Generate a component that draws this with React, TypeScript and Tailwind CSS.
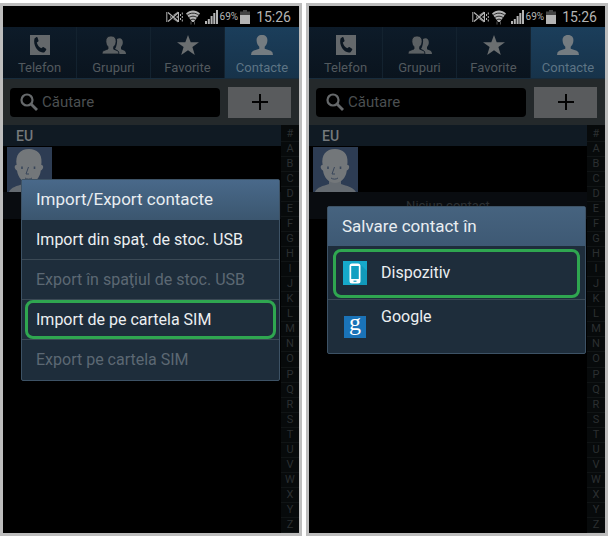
import type { ReactNode } from 'react';

const LETTERS = '#ABCDEFGHIJKLMNOPQRSTUVWXYZ'.split('');

function StatusBar() {
  return (
    <div className="flex h-[21px] items-center justify-end bg-black pt-px pr-2 text-[#b4b4b4]">
      <svg className="mr-[3px] h-3 w-[17px]" viewBox="0 0 17 12" fill="none" stroke="currentColor" aria-hidden="true">
        <path d="M4 4h3l5-3.500v11L7 8H4z" fill="#8c8c8c" stroke="none" />
        <path d="M2.500 2.500L13 9.500M2.500 9.500L13 2.500" stroke="#000" strokeWidth="2.200" />
        <path d="M2 1.500l10.500 9M2 10.500l10.500-9" strokeWidth="1.200" />
        <path d="M.8 1v10M12.500 1v10M14.500 3v2M14.500 7v2M16.300 1.500v2M16.300 5v2M16.300 8.500v2" strokeWidth="1" />
      </svg>
      <svg className="mr-[5px] h-[15px] w-[14px]" viewBox="0 0 14 15" fill="none" aria-hidden="true">
        <path d="M0 3.500C4-.5 10-.5 14 3.500L7.800 12H6.200z" fill="currentColor" />
        <path d="M1 5.400c3.500-3 8.500-3 12 0M2.800 7.700c2.500-2 5.900-2 8.400 0M4.600 9.900c1.500-1 3.300-1 4.800 0" stroke="#000" strokeWidth=".8" />
        <path d="M5 14.500v-3M8.500 11.500v3" stroke="#555" />
      </svg>
      <svg className="mr-0.5 h-[14px] w-[13px]" viewBox="0 0 13 14" fill="currentColor" aria-hidden="true">
        <path d="M0 11h2v3H0zM2.800 9h2v5h-2zM5.600 6h2v8h-2zM8.300 3h2v11h-2zM11 0h2v14h-2z" />
      </svg>
      <span className="mr-0.5 text-[10px] leading-none">69%</span>
      <svg className="mr-[6px] h-[14px] w-[10px]" viewBox="0 0 10 14" fill="currentColor" aria-hidden="true">
        <path d="M3 0h4v1.500h3V5H0V1.500h3z" fill="#444" />
        <path d="M0 5h10v9H0z" />
      </svg>
      <span className="text-[14px] leading-none">15:26</span>
    </div>
  );
}

function PhoneIcon() {
  return (
    <svg className="h-5 w-5" viewBox="0 0 20 20" aria-hidden="true">
      <path d="M0 0h20v20H0z" fill="#64686b" />
      <path
        d="M4.500 3.500L6.500 2q.8-.2 1 .5l1 3q.1.800-.5 1.200L6.800 7.600c.6 2.500 2.100 4.600 4.500 5.700l1.300-1q.6-.4 1.200 0l2.200 1.500q.6.600.1 1.200l-1.600 2.200c-5.800 1.800-11.900-6.500-10-13.700z"
        fill="#0c1722"
      />
    </svg>
  );
}

function GroupIcon() {
  return (
    <svg className="h-5 w-[26px]" viewBox="0 0 26 20" fill="#5b6063" aria-hidden="true">
      <path d="M16 4c3-2 6-.3 5.800 3.500 0 2-.8 3.300-1.800 4.500v2.200l3.500 1.500q1.500.8 1.500 3.200h-7c0-2.500-1-3.500-4-4.800 1.500-2.500 2.500-7 2-10.100z" />
      <path
        d="M10 1c3.500 0 5.300 2.200 5.100 5.500-.1 2.300-1 4.200-2.400 5.300v2.400l3.800 1.500q1.500.8 1.500 3.300H1q0-2.500 1.500-3.300l4.500-1.700v-2.200C5.800 10.700 5 8.800 4.900 6.500 4.700 3.200 6.500 1 10 1z"
        stroke="#0c1722"
        strokeWidth=".8"
      />
    </svg>
  );
}

function StarIcon() {
  return (
    <svg className="h-5 w-[22px]" viewBox="0 0 22 20" fill="#6a6e70" aria-hidden="true">
      <path d="M11 0l2.700 7.300H22l-6.600 4.800L17.800 20 11 15.300 4.200 20l2.400-7.900L0 7.300h8.300z" />
    </svg>
  );
}

function PersonIcon() {
  return (
    <svg className="h-5 w-6" viewBox="0 0 24 20" fill="#747c81" aria-hidden="true">
      <path d="M12 0c3.800 0 5.600 2.300 5.400 5.700-.1 2.500-1.200 4.700-2.700 6v2l6 2q2.300.9 2.300 4.300H1q0-3.400 2.300-4.300l6-2v-2c-1.500-1.300-2.600-3.500-2.700-6C6.400 2.300 8.200 0 12 0z" />
    </svg>
  );
}

const TABS = [
  { name: 'Telefon', icon: <PhoneIcon /> },
  { name: 'Grupuri', icon: <GroupIcon /> },
  { name: 'Favorite', icon: <StarIcon /> },
  { name: 'Contacte', icon: <PersonIcon />, active: true },
];

function Tabs() {
  return (
    <nav className="grid h-[52px] grid-cols-4 border-b border-[#182c3c] bg-linear-to-b from-[#0d1b29] to-[#0a141e]">
      {TABS.map(({ name, icon, active }) => (
        <button
          key={name}
          type="button"
          className={
            active
              ? 'flex flex-col items-center gap-[3px] bg-linear-to-b from-[#1b3e5b] to-[#17334a] pt-2 text-[#5d7485]'
              : 'flex flex-col items-center gap-[3px] border-r border-[#13222f] pt-2 text-[#52595e]'
          }
        >
          {icon}
          <span className="text-[13px] leading-5">{name}</span>
        </button>
      ))}
    </nav>
  );
}

function SearchBar() {
  return (
    <div className="flex h-[46px] items-center gap-2 bg-[#24292b] pr-2 pl-[7px]">
      <label className="flex h-[29px] min-w-0 flex-1 items-center gap-1 rounded bg-black pl-[10px]">
        <svg className="h-[18px] w-[18px] shrink-0" viewBox="0 0 18 18" fill="none" stroke="#66696b" aria-hidden="true">
          <circle cx="7" cy="7" r="5.500" strokeWidth="2.200" />
          <path d="M11 11l6 6" strokeWidth="2.800" />
        </svg>
        <input
          type="search"
          aria-label="Căutare"
          placeholder="Căutare"
          className="w-full min-w-0 bg-transparent text-[15px] outline-none placeholder:text-[#4b4f51]"
        />
      </label>
      <button
        type="button"
        aria-label="+"
        className="flex h-[31px] w-[63px] items-center justify-center bg-[#595b5d]"
      >
        <svg className="h-4 w-4" viewBox="0 0 16 16" stroke="#030303" strokeWidth="2" aria-hidden="true">
          <path d="M8 0v16M0 8h16" />
        </svg>
      </button>
    </div>
  );
}

function Avatar() {
  return (
    <svg className="h-[45px] w-[45px]" viewBox="0 0 45 45" aria-hidden="true">
      <path d="M0 0h45v45H0z" fill="#2d3c53" />
      <path d="M2 45c2-5 8-6 14-8v-6h12v6c6 2 12 3 15 8z" fill="#656b71" />
      <path
        d="M22 2c8 0 13 5 12.500 13l-.2 3c2.500-.5 2.700 4-.5 5.500C33 31 28 36 22 36S11 31 10 23.500C7 22 7 17.500 9.600 18C8 8 13 2 22 2z"
        fill="#73777a"
      />
      <path d="M15 19.500v2.500M27.500 19.500v2.500" stroke="#39465a" strokeWidth="1.600" />
      <path d="M21.500 20l-2.500 7h3M18 31c2 1.500 5 1.500 7 0" fill="none" stroke="#39465a" />
    </svg>
  );
}

type PhoneProps = {
  emptyText?: string;
  children: ReactNode;
};

function Phone({ emptyText, children }: PhoneProps) {
  return (
    <section className="relative flex min-w-0 flex-1 flex-col border-[3px] border-[#bdbdbd] bg-black">
      <StatusBar />
      <Tabs />
      <SearchBar />
      <div className="flex flex-1">
        <div className="flex-1">
          <h2 className="mb-px h-[21px] bg-[#101a23] pl-[13px] text-[14px] leading-[22px] font-medium text-[#75797c]">
            EU
          </h2>
          <div className="pl-1">
            <Avatar />
          </div>
          <p className="h-[27px] bg-[#090c10] text-center text-[13px] leading-7 text-[#2c3033]">{emptyText}</p>
        </div>
        <ul className="flex w-[18px] flex-col bg-[#070a0b] pt-0.5 text-center text-[11px] leading-[14px] text-[#2b2f31]">
          {LETTERS.map((letter) => (
            <li key={letter} className="flex-1 border-b border-[#101415]">
              {letter}
            </li>
          ))}
        </ul>
      </div>
      {children}
    </section>
  );
}

const ACTIONS = [
  { label: 'Import din spaţ. de stoc. USB' },
  { label: 'Export în spaţiul de stoc. USB', disabled: true },
  { label: 'Import de pe cartela SIM', marked: true },
  { label: 'Export pe cartela SIM', disabled: true },
];

function ImportExportDialog() {
  return (
    <div
      role="dialog"
      aria-labelledby="import-title"
      className="absolute top-[173px] right-[19px] left-[18px] rounded-xs border border-[#3d5265] bg-[#1e2d3b]"
    >
      <h3
        id="import-title"
        className="h-10 bg-linear-to-b from-[#49698a] to-[#3b566f] pl-[14px] text-[17px] leading-[39px] text-[#e8edf1]"
      >
        Import/Export contacte
      </h3>
      <ul className="divide-y divide-[#3b4955]">
        {ACTIONS.map(({ label, disabled, marked }) => (
          <li key={label} className="relative h-10">
            <button
              type="button"
              disabled={disabled}
              className="h-full w-full pl-[14px] text-left text-[16px] text-[#eceff1] disabled:text-[#5c6873]"
            >
              {label}
            </button>
            {marked && (
              <span className="pointer-events-none absolute inset-x-[3px] inset-y-0 rounded-lg border-3 border-[#2fa650]" />
            )}
          </li>
        ))}
      </ul>
    </div>
  );
}

function SaveDialog() {
  return (
    <div
      role="dialog"
      aria-labelledby="save-title"
      className="absolute top-[200px] right-[19px] left-[18px] rounded-xs border border-[#3d5265] bg-[#1e2d3b]"
    >
      <h3
        id="save-title"
        className="h-[39px] bg-linear-to-b from-[#46637f] to-[#3e5974] pl-[14px] text-[17px] leading-[39px] text-[#e8edf1]"
      >
        Salvare contact în
      </h3>
      <ul className="divide-y divide-[#3b4955]">
        <li className="relative h-[54px]">
          <button type="button" className="flex h-full w-full items-center gap-[14px] pl-[15px] text-[16px] text-[#eceff1]">
            <svg className="h-6 w-6" viewBox="0 0 24 24" aria-hidden="true">
              <path d="M0 0h24v24H0z" fill="#16a9cb" />
              <path d="M17 3l7 7v14H10l-3-3z" fill="#1199ba" />
              <rect x="6.500" y="2.500" width="11" height="20" rx="2.500" fill="#fff" />
              <path d="M8.200 5h7.600v13H8.200z" fill="#12a0c2" />
              <path d="M10.500 20.200h3" stroke="#12a0c2" strokeWidth="1.200" />
            </svg>
            Dispozitiv
          </button>
          <span className="pointer-events-none absolute inset-x-[5px] top-[3px] bottom-px rounded-lg border-3 border-[#2fa650]" />
        </li>
        <li className="h-[53px]">
          <button type="button" className="flex h-full w-full gap-[15px] pl-4 text-[16px] text-[#eceff1]">
            <svg className="mt-4 h-[22px] w-[22px] overflow-visible" viewBox="0 0 22 22" aria-hidden="true">
              <path d="M0 0h22v22H0z" fill="#1a73b8" />
              <text x="11" y="14" textAnchor="middle" fill="#fff" fontSize="24" className="font-['Liberation_Serif',serif]">
                g
              </text>
            </svg>
            <span className="mt-[5px] leading-6">Google</span>
          </button>
        </li>
      </ul>
    </div>
  );
}

export default function App() {
  return (
    <main className="flex min-h-screen gap-1 bg-white pt-[3px] pr-[5px] pb-0.5 font-[Roboto,sans-serif]">
      <Phone>
        <ImportExportDialog />
      </Phone>
      <Phone emptyText="Niciun contact">
        <SaveDialog />
      </Phone>
    </main>
  );
}
